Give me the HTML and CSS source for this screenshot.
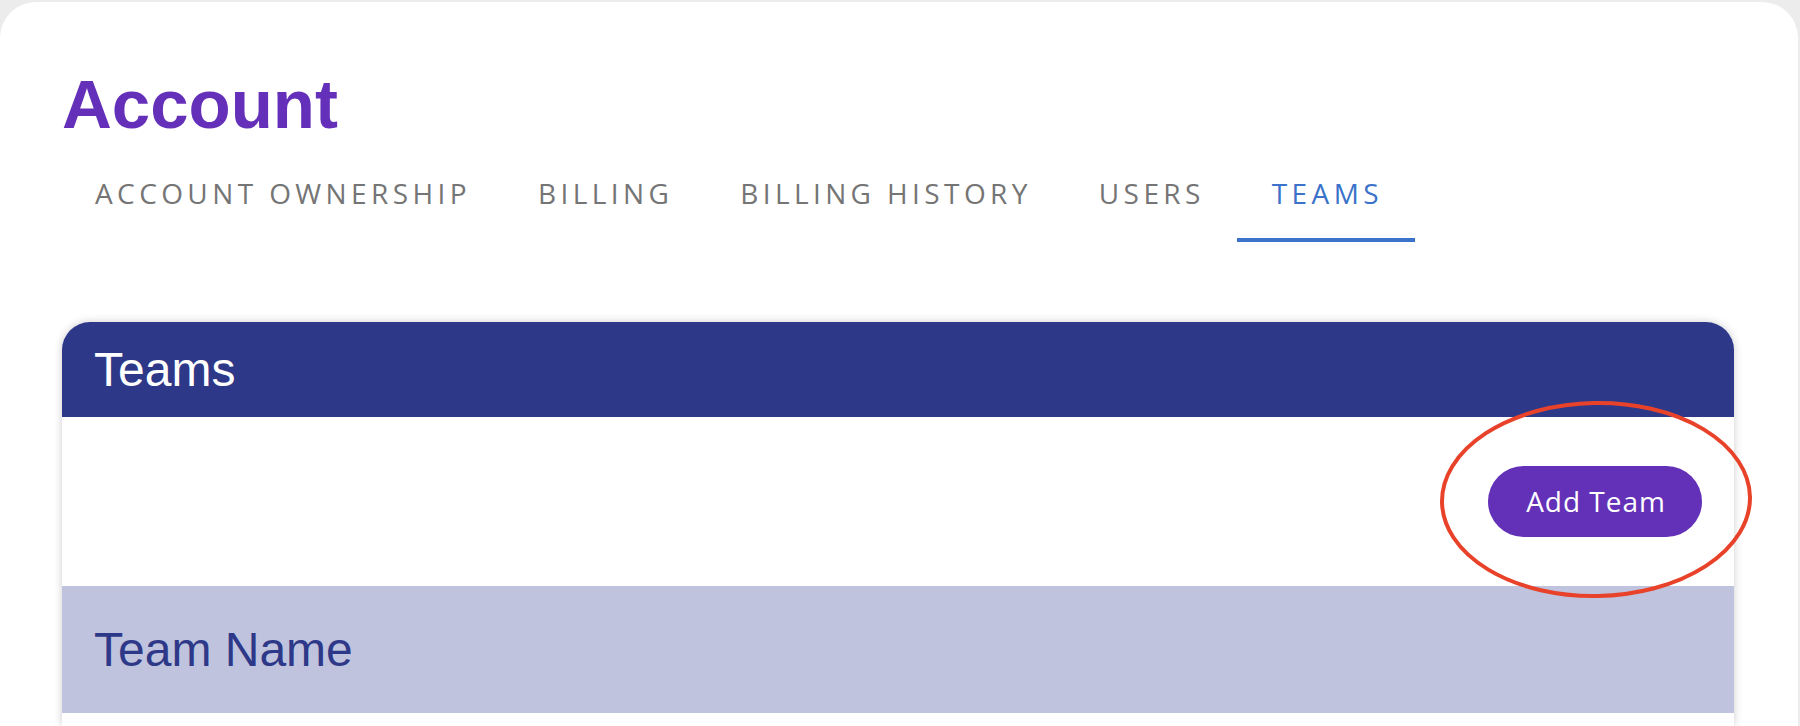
FILE: index.html
```html
<!DOCTYPE html>
<html lang="en">
<head>
  <meta charset="UTF-8">
  <title>Account - Teams</title>
  <link rel="stylesheet" href="styles.css">
</head>
<body>
  <div class="panel">
    <h1 class="page-title">Account</h1>

    <nav class="tabs">
      <a class="tab">Account Ownership</a>
      <a class="tab">Billing</a>
      <a class="tab">Billing History</a>
      <a class="tab">Users</a>
      <a class="tab active">Teams</a>
    </nav>

    <section class="card">
      <div class="card-header">Teams</div>
      <div class="card-body">
        <button class="btn-add" type="button">Add Team</button>
        <svg class="highlight" width="312" height="197" viewBox="0 0 312 197">
          <ellipse cx="156" cy="98.5" rx="154" ry="96.5" transform="rotate(-1 156 98.5)" fill="none" stroke="#e8432a" stroke-width="4"/>
        </svg>
      </div>
      <div class="table-head">Team Name</div>
      <div class="table-row"></div>
    </section>
  </div>
</body>
</html>
```

FILE: styles.css
```css
html, body { margin: 0; height: 100%; }
body { background-color: #ececec; font-family: "Liberation Sans", Arial, sans-serif; overflow: hidden; }

.panel { margin-top: 2px; width: 1798px; min-height: 724px; box-sizing: border-box; background: white; border-radius: 36px 36px 0 0; padding: 69px 64px 0 62px; }

.page-title { margin: 0; font-size: 69px; line-height: 68px; font-weight: bold; color: #6530b9; }

.tabs { display: flex; margin: 28px 0 0 -2px; }
.tab { display: block; padding: 12px 32px 31px 35px; border-bottom: 4px solid transparent; font-family: "Open Sans", sans-serif; font-size: 28px; line-height: 28px; letter-spacing: 4.4px; text-transform: uppercase; color: #757575; cursor: pointer; }
.tab.active { color: #3a73c9; border-bottom-color: #3a73c9; }

.card { margin-top: 80px; background: white; border-radius: 28px 28px 0 0; box-shadow: 0 0 9px rgba(0,0,0,0.2); min-height: 404px; }
.card-header { background-color: #2e3888; color: white; font-size: 48px; line-height: 48px; padding: 24px 32px 23px; border-radius: 28px 28px 0 0; }

.card-body { position: relative; display: flex; justify-content: flex-end; padding: 49px 32px; }
.btn-add { padding: 21px 36px 22px 38px; border: none; border-radius: 36px; background-color: #6331b8; color: white; font-family: "Open Sans", sans-serif; font-size: 28px; line-height: 28px; letter-spacing: 1px; cursor: pointer; }
.highlight { position: absolute; left: 1378px; top: -16px; z-index: 2; overflow: visible; }

.table-head { background-color: #bfc3dd; color: #2e3888; font-size: 48px; line-height: 48px; padding: 40px 32px 39px; }
.table-row { height: 13px; }
```
